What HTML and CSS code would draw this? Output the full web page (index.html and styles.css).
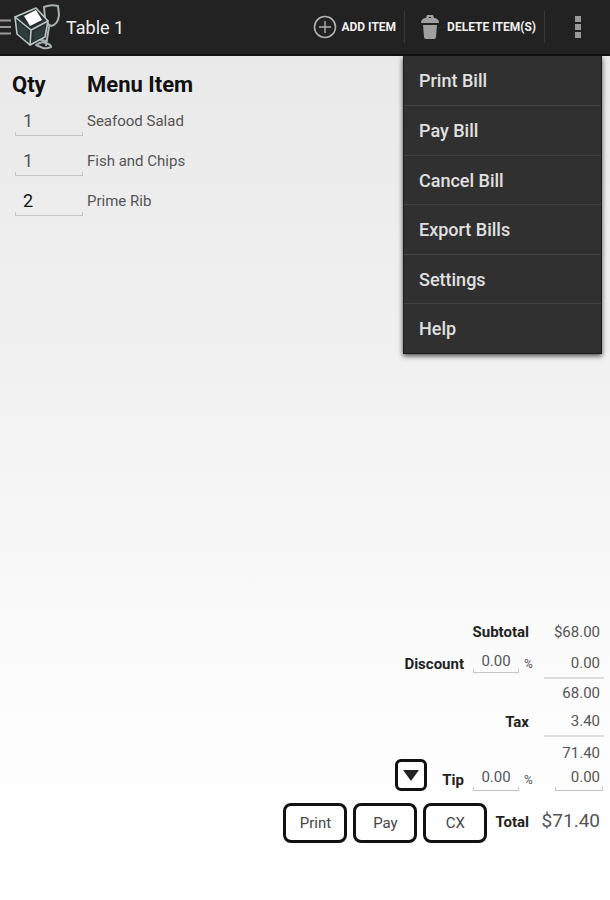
FILE: index.html
```html
<!DOCTYPE html>
<html lang="en">
<head>
    <meta charset="UTF-8">
    <meta name="viewport" content="width=device-width, initial-scale=1.0">
    <title>Table 1</title>
    <link rel="stylesheet" href="styles.css">
</head>
<body>
    <header class="action-bar">
        <button class="nav-button" aria-label="Open navigation">
            <svg class="drawer-icon" viewBox="0 0 11 16" width="11" height="16">
                <path d="M0 1.5h11M0 8h11M0 14.5h11" stroke="#999" stroke-width="2"/>
            </svg>
            <svg class="logo" viewBox="0 0 48 48" width="48" height="48" fill="none" stroke-linejoin="round" stroke-linecap="round">
                <path d="M31 4q7-3 14-1l1 9q-1 10-8 11-5-2-6-8z" fill="#222" stroke="#a9b3b1" stroke-width="2"/>
                <path d="M36 24l-3 18M23 42q6-4 9-2 6 1 6 4-5 2-8 1zM28 37l6 1" stroke="#a9b3b1" stroke-width="2"/>
                <path d="M2 14l21-9 12 13-3 16-15 8L4 31z" fill="#26302f" stroke="#bcc6c4" stroke-width="1.6"/>
                <path d="M2 14l16 13 17-9M18 27l-1 15" stroke="#bcc6c4" stroke-width="1.6"/>
                <path d="M5 19l10 8v11L6 30zM21 29l11-6-2 10-9 5z" fill="#2e3d3a"/>
                <path d="M11 13l12-6 6 10-12 6z" fill="#fff"/>
            </svg>
        </button>
        <h1 class="title">Table 1</h1>
        <button class="action">
            <svg viewBox="0 0 24 24" width="24" height="24" fill="none" stroke="#b0b0b0">
                <circle cx="12" cy="12" r="10.5" stroke-width="1.6"/>
                <path d="M12 6v12M6 12h12" stroke-width="1.4"/>
            </svg>
            Add Item
        </button>
        <button class="action action-delete">
            <svg viewBox="0 0 18 26" width="18" height="26" fill="#a0a0a0">
                <path d="M5 4l1-3h6l1 3h-3V3H8v1z"/>
                <path d="M0 9q0-4 4-5h10q4 1 4 5zM2 11h14l-1 12q0 2-2 2H5q-2 0-2-2z"/>
            </svg>
            Delete Item(s)
        </button>
        <button class="overflow-button" aria-label="More options">
            <svg viewBox="0 0 6 22" width="6" height="22" fill="#999">
                <path d="M0 0h6v6H0zM0 8h6v6H0zM0 16h6v6H0z"/>
            </svg>
        </button>
        <div class="overflow-menu">
            <button>Print Bill</button>
            <button>Pay Bill</button>
            <button>Cancel Bill</button>
            <button>Export Bills</button>
            <button>Settings</button>
            <button>Help</button>
        </div>
    </header>

    <main class="bill">
        <table class="items">
            <thead>
                <tr><th class="qty-head">Qty</th><th>Menu Item</th></tr>
            </thead>
            <tbody>
                <tr>
                    <td><input class="field qty" id="qty1" type="text" value="1"></td>
                    <td><label for="qty1">Seafood Salad</label></td>
                </tr>
                <tr>
                    <td><input class="field qty" id="qty2" type="text" value="1"></td>
                    <td><label for="qty2">Fish and Chips</label></td>
                </tr>
                <tr>
                    <td><input class="field qty qty-active" id="qty3" type="text" value="2"></td>
                    <td><label for="qty3">Prime Rib</label></td>
                </tr>
            </tbody>
        </table>
    </main>

    <footer class="totals">
        <div class="row subtotal-row">
            <span class="label wide">Subtotal</span>
            <span class="amount">$68.00</span>
        </div>
        <div class="row discount-row">
            <label class="label" for="discount">Discount</label>
            <input class="field percent" id="discount" type="text" value="0.00">
            <span class="unit">%</span>
            <span class="amount ruled">0.00</span>
        </div>
        <div class="row discounted-row">
            <span class="amount">68.00</span>
        </div>
        <div class="row">
            <span class="label wide">Tax</span>
            <span class="amount ruled">3.40</span>
        </div>
        <div class="row tip-row">
            <button class="box-button tip-button" aria-label="Choose tip">
                <svg viewBox="0 0 16 11" width="16" height="11"><path d="M0 0h16L8 11z" fill="#222"/></svg>
            </button>
            <label class="label tip-label" for="tip">Tip</label>
            <input class="field percent" id="tip" type="text" value="0.00">
            <span class="unit">%</span>
            <div class="tip-amounts">
                <span class="amount">71.40</span>
                <input class="field tip-amount" type="text" value="0.00" aria-label="Tip amount">
            </div>
        </div>
        <div class="row total-row">
            <button class="box-button">Print</button>
            <button class="box-button">Pay</button>
            <button class="box-button">CX</button>
            <span class="label total-label">Total</span>
            <span class="amount grand">$71.40</span>
        </div>
    </footer>
</body>
</html>
```
FILE: styles.css
```css
* {
    box-sizing: border-box;
}
body {
    margin: 0;
    min-height: 100vh;
    display: flex;
    flex-direction: column;
    font-family: Roboto, sans-serif;
    font-size: 15px;
    color: #555;
    background: linear-gradient(#e8e8e8, #f2f2f2 45%, #fcfcfc 75%, #fff);
}
button, input {
    font-family: inherit;
    border: none;
    padding: 0;
}
button {
    cursor: pointer;
    background: none;
}

/* action bar */
.action-bar {
    position: relative;
    display: flex;
    align-items: center;
    height: 56px;
    background: #222;
    border-bottom: 2px solid #111;
}
.nav-button {
    display: flex;
    align-items: center;
    gap: 2px;
}
.title {
    flex: 1;
    margin: 0 0 0 5px;
    font-size: 18px;
    font-weight: 400;
    color: #f0f0f0;
}
.action {
    display: flex;
    align-items: center;
    gap: 4px;
    height: 32px;
    padding-right: 8px;
    border-right: 1px solid #383838;
    font-size: 12px;
    font-weight: 700;
    text-transform: uppercase;
    color: #f0f0f0;
}
.action-delete {
    gap: 8px;
    padding-left: 16px;
}
.overflow-button {
    width: 65px;
    height: 54px;
}
.overflow-button svg {
    display: block;
    margin: 0 auto;
}
.overflow-menu {
    position: absolute;
    top: 56px;
    right: 8px;
    width: 199px;
    background: #303030;
    border: 1px solid #1c1c1c;
    border-top: none;
    box-shadow: 0 2px 5px rgba(0, 0, 0, 0.7);
}
.overflow-menu button {
    display: block;
    width: 100%;
    height: 49px;
    padding-left: 15px;
    text-align: left;
    font-size: 18px;
    font-weight: 500;
    color: #e0e0e0;
}
.overflow-menu button:nth-child(even) {
    height: 50px;
}
.overflow-menu button + button {
    border-top: 1px solid #444;
}

/* text fields with the bracket underline */
.field {
    border-radius: 0;
    background:
        linear-gradient(#c4c4c4, #c4c4c4) bottom / 100% 1px no-repeat,
        linear-gradient(#c4c4c4, #c4c4c4) left bottom / 1px 4px no-repeat,
        linear-gradient(#c4c4c4, #c4c4c4) right bottom / 1px 4px no-repeat;
    color: #555;
}

/* ordered items */
.bill {
    flex: 1;
    padding: 14px 12px;
}
.items {
    border-collapse: collapse;
}
.items th {
    height: 30px;
    padding: 0 0 2px;
    text-align: left;
    font-size: 22px;
    font-weight: 700;
    color: #111;
}
.items td {
    height: 40px;
    padding: 0;
}
.items td + td {
    padding-top: 2px;
}
.items .qty-head {
    width: 75px;
}
.qty {
    display: block;
    width: 68px;
    height: 32px;
    margin-left: 3px;
    padding: 0 8px;
    font-size: 18px;
}
.qty-active {
    color: #111;
}

/* totals */
.totals {
    padding: 0 6px 57px;
}
.row {
    display: flex;
    justify-content: flex-end;
    align-items: center;
    height: 30px;
}
.label {
    font-weight: 700;
    color: #222;
}
.wide {
    margin-right: 15px;
}
.percent {
    width: 46px;
    height: 28px;
    margin: 0 5px 0 9px;
    text-align: center;
    font-size: 15px;
}
.unit {
    width: 20px;
    font-size: 12px;
}
.amount {
    width: 60px;
    padding-right: 4px;
    text-align: right;
    line-height: 30px;
}
.ruled {
    border-bottom: 2px solid #ddd;
    line-height: 28px;
}
.subtotal-row {
    height: 34px;
}
.discount-row .percent {
    align-self: flex-start;
    height: 24px;
}
.discounted-row {
    height: 28px;
}
.tip-row {
    align-items: flex-end;
    height: 54px;
}
.tip-row .unit, .tip-label {
    line-height: 22px;
}
.tip-button {
    height: 32px;
    width: 32px;
    margin-right: 15px;
}
.tip-amounts {
    display: flex;
    flex-direction: column;
    align-items: flex-end;
    width: 60px;
}
.tip-amounts .amount {
    line-height: 20px;
}
.tip-amount {
    width: 48px;
    height: 28px;
    padding-right: 3px;
    margin-right: 1px;
    text-align: right;
    font-size: 15px;
}
.box-button {
    display: flex;
    align-items: center;
    justify-content: center;
    border: 3px solid #111;
    border-radius: 6px;
    background: #fff;
    color: #444;
}
.total-row {
    height: 52px;
    align-items: flex-end;
    gap: 6px;
}
.total-row .box-button {
    width: 64px;
    height: 40px;
    border-radius: 8px;
    font-size: 15px;
}
.total-label {
    margin-left: 2px;
    line-height: 42px;
}
.grand {
    width: 69px;
    font-size: 19px;
    line-height: 44px;
}
```
